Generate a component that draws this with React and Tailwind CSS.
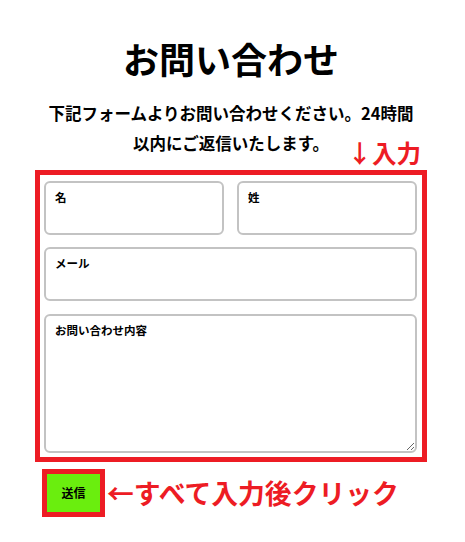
import React from "react";

function Field({ label, className = "" }) {
  return (
    <label
      className={`block h-[54px] rounded-[6px] border-2 border-[#c3c3c3] px-[9px] pt-[6px] ${className}`}
    >
      <span className="block text-[11.5px] font-bold leading-[17px]">{label}</span>
      <input type="text" className="block w-full bg-transparent text-[12px] outline-none" />
    </label>
  );
}

export default function App() {
  return (
    <div className="min-h-[542px] w-[465px] bg-white font-['Noto_Sans_CJK_JP',sans-serif] text-black">
      <div className="ml-[35px] w-[392px] pt-[31px]">
        <h1 className="text-center text-[36px] font-bold leading-[54px]">お問い合わせ</h1>
        <p className="mt-[13px] text-center text-[16.5px] font-bold leading-[30px]">
          下記フォームよりお問い合わせください。24時間
          <br />
          以内にご返信いたします。
        </p>

        <form className="mt-[12px]">
          <div className="relative border-[5px] border-[#ed1c24] pt-[6px] pr-[5px] pb-[4px] pl-[4px]">
            <span className="absolute top-[-34px] right-[1px] text-[24.5px] font-bold leading-[24px] text-[#ed1c24]">
              ↓入力
            </span>
            <div className="flex gap-[13px]">
              <Field label="名" className="flex-1" />
              <Field label="姓" className="flex-1" />
            </div>
            <Field label="メール" className="mt-[12px]" />
            <textarea
              placeholder="お問い合わせ内容"
              className="mt-[13px] block h-[139px] w-full resize-y rounded-[6px] border-2 border-[#c3c3c3] px-[9px] pt-[6px] text-[11.5px] leading-[17px] outline-none placeholder:font-bold placeholder:text-black"
            />
          </div>

          <div className="mt-[7px] ml-[7px] flex items-center">
            <button type="button" className="border-[5px] border-[#ed1c24]">
              <span className="flex h-[38px] w-[53px] items-center justify-center bg-[#6aee0e] text-[12px] font-bold">
                送信
              </span>
            </button>
            <span className="ml-[2px] text-[26.8px] font-bold leading-[30px] text-[#ed1c24]">
              ←すべて入力後クリック
            </span>
          </div>
        </form>
      </div>
    </div>
  );
}
